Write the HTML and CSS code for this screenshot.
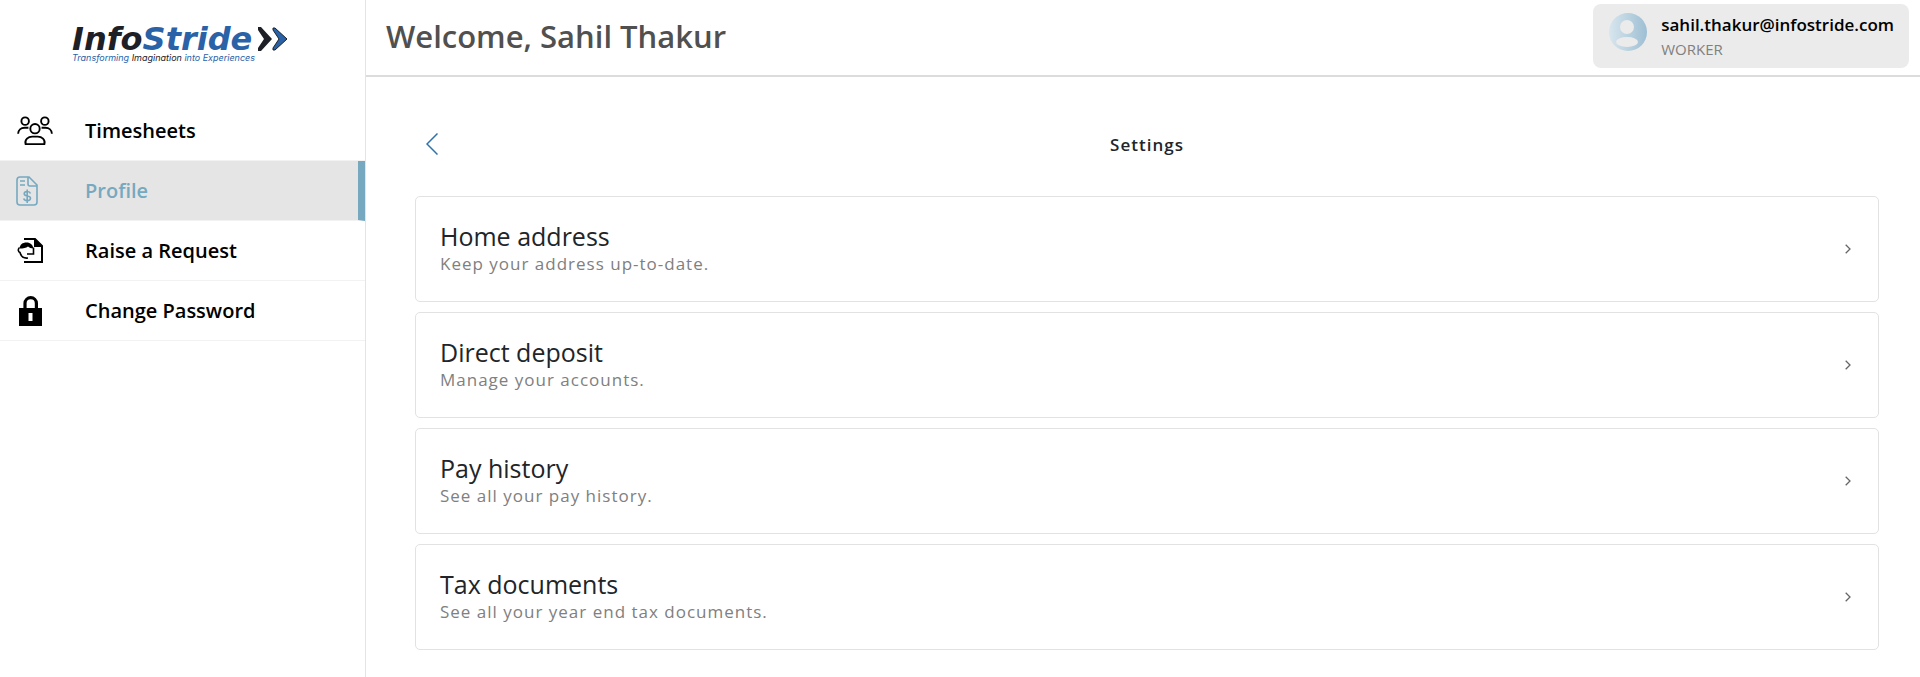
FILE: index.html
```html
<!DOCTYPE html>
<html lang="en">
<head>
    <meta charset="UTF-8">
    <meta name="viewport" content="width=device-width, initial-scale=1.0">
    <title>Settings</title>
    <link rel="stylesheet" href="styles.css">
</head>
<body>
    <aside class="sidebar">
        <a class="logo" href="#">
            <span class="logo-row">
                <span class="logo-name">Info<span class="blue">Stride</span></span>
                <svg class="logo-mark" viewBox="0 0 30 24" aria-hidden="true">
                    <path fill="#1d2026" d="M0 0h3l11 12L3 24H0v-3l6-9-6-9z"/>
                    <path fill="#2a62a8" stroke="#1d2026" d="M15 1h2l12 11-12 11h-2v-2l6-9-6-9z"/>
                </svg>
            </span>
            <span class="logo-tag">Transforming <span class="dark">Imagination</span> into Experiences</span>
        </a>
        <nav class="menu">
            <a href="#">
                <svg class="icon wide" viewBox="0 0 38 32" aria-hidden="true">
                    <g fill="none" stroke="currentColor" stroke-width="2">
                        <circle cx="8.5" cy="5.5" r="4"/>
                        <circle cx="29.5" cy="5.5" r="4"/>
                        <circle cx="19" cy="13.5" r="5"/>
                        <path d="M1 19c0-4 3-6.5 7-6.5h4M37 19c0-4-3-6.5-7-6.5h-4M9 30c-1.5-5 3-8 7-8h6c4 0 8.5 3 7 8z"/>
                    </g>
                </svg>
                Timesheets
            </a>
            <a class="active" href="#">
                <svg class="icon" viewBox="0 0 30 30" aria-hidden="true">
                    <g fill="none" stroke="currentColor" stroke-width="1.6">
                        <path d="M4 1h9l8 8v17a3 3 0 0 1-3 3H4a3 3 0 0 1-3-3V4a3 3 0 0 1 3-3z"/>
                        <path d="M12 1v7a2 2 0 0 0 2 2h7M4 5h5M4 9h5"/>
                        <path d="M14.5 17.5c-.5-1.5-1.5-2-3.3-2s-3 .9-3 2.3 1.2 1.9 3 2.2 3.3.9 3.3 2.3-1.5 2.3-3.3 2.3-3-.6-3.5-2.2M11.2 13.5V27"/>
                    </g>
                </svg>
                Profile
            </a>
            <a href="#">
                <svg class="icon" viewBox="0 0 30 30" aria-hidden="true">
                    <path fill="none" stroke="currentColor" stroke-width="2" d="M8 3h11l7 7v16H8"/>
                    <path fill="currentColor" d="M18 2l9 9h-9zM3.5 12.5C4 8.5 6.5 6.5 10.5 6.5s6.5 2.500 6.8 6c-2.3 0-4-.8-5.3-2-2 1.5-4.5 2-8.5 2z"/>
                    <path fill="none" stroke="currentColor" stroke-width="1.6" d="M3.5 11.5c-1.8 1.5-1.5 4.5.5 5 1 4 4 6 8 5.5M17.5 11.5v6.5H11"/>
                </svg>
                Raise a Request
            </a>
            <a href="#">
                <svg class="icon" viewBox="0 0 30 30" aria-hidden="true">
                    <path fill="none" stroke="currentColor" stroke-width="3.2" d="M9 13V7.3a5.700 5.700 0 0 1 11.400 0V13"/>
                    <path fill="currentColor" fill-rule="evenodd" d="M3 12h23v18H3zM12.5 17v8h4v-8z"/>
                </svg>
                Change Password
            </a>
        </nav>
    </aside>

    <div class="page">
        <header class="topbar">
            <h1>Welcome, Sahil Thakur</h1>
            <button class="user" type="button">
                <svg class="avatar" viewBox="0 0 38 38" aria-hidden="true">
                    <defs>
                        <linearGradient id="avatarFill">
                            <stop offset="0" stop-color="#d8e6ee"/>
                            <stop offset="1" stop-color="#9dbfd3"/>
                        </linearGradient>
                    </defs>
                    <circle cx="19" cy="19" r="19" fill="url(#avatarFill)"/>
                    <circle cx="18" cy="14" r="7" fill="#ebebeb"/>
                    <ellipse cx="18" cy="29" rx="11" ry="5" fill="#ebebeb"/>
                </svg>
                <span class="user-text">
                    <span class="email">sahil.thakur@infostride.com</span>
                    <span class="role">WORKER</span>
                </span>
            </button>
        </header>

        <main class="content">
            <div class="heading">
                <button class="back" type="button" aria-label="Back">
                    <svg viewBox="0 0 12 22" aria-hidden="true"><path d="M11.5 .5L1 11l10.5 10.5"/></svg>
                </button>
                <h2>Settings</h2>
            </div>
            <a class="card" href="#">
                <span class="card-text">
                    <span class="card-title">Home address</span>
                    <span class="card-note">Keep your address up-to-date.</span>
                </span>
                <svg class="arrow" viewBox="0 0 6 10" aria-hidden="true"><path d="M.7 .7L5 5 .7 9.3"/></svg>
            </a>
            <a class="card" href="#">
                <span class="card-text">
                    <span class="card-title">Direct deposit</span>
                    <span class="card-note">Manage your accounts.</span>
                </span>
                <svg class="arrow" viewBox="0 0 6 10" aria-hidden="true"><path d="M.7 .7L5 5 .7 9.3"/></svg>
            </a>
            <a class="card" href="#">
                <span class="card-text">
                    <span class="card-title">Pay history</span>
                    <span class="card-note">See all your pay history.</span>
                </span>
                <svg class="arrow" viewBox="0 0 6 10" aria-hidden="true"><path d="M.7 .7L5 5 .7 9.3"/></svg>
            </a>
            <a class="card" href="#">
                <span class="card-text">
                    <span class="card-title">Tax documents</span>
                    <span class="card-note">See all your year end tax documents.</span>
                </span>
                <svg class="arrow" viewBox="0 0 6 10" aria-hidden="true"><path d="M.7 .7L5 5 .7 9.3"/></svg>
            </a>
        </main>
    </div>
</body>
</html>
```

FILE: styles.css
```css
* {
    box-sizing: border-box;
}

body {
    font-family: "Open Sans", "Noto Sans", sans-serif;
    background-color: #fff;
    color: #212529;
    margin: 0;
    display: flex;
    min-height: 100vh;
}

a {
    color: inherit;
    text-decoration: none;
}

button {
    font-family: inherit;
    border: none;
    padding: 0;
    cursor: pointer;
}

svg {
    flex: none;
}

/* sidebar */
.sidebar {
    width: 366px;
    flex: none;
    border-right: 1px solid #e4e4e4;
}

.logo {
    display: block;
    padding: 25px 0 0 72px;
    height: 101px;
}

.logo-row {
    display: flex;
    align-items: center;
    gap: 6px;
    height: 28px;
}

.logo-name {
    font-family: "DejaVu Sans", sans-serif;
    font-size: 32px;
    font-weight: bold;
    font-style: italic;
    line-height: 28px;
    color: #1d2026;
}

.logo-mark {
    width: 30px;
    height: 24px;
}

.logo-tag {
    display: block;
    font-family: Inter, sans-serif;
    font-size: 9px;
    font-style: italic;
    line-height: 10px;
    color: #2a62a8;
}

.blue {
    color: #2a62a8;
}

.dark {
    color: #1d2026;
}

.menu a {
    display: grid;
    grid-template-columns: 69px 1fr;
    align-items: center;
    height: 60px;
    padding-left: 16px;
    border-bottom: 1px solid #f2f2f2;
    font-size: 20px;
    font-weight: 600;
    color: #000;
}

.menu a.active {
    background-color: #e5e5e5;
    border-right: 7px solid #76a9c0;
    color: #76a9c0;
}

.icon {
    width: 30px;
    height: 30px;
}

.icon.wide {
    width: 38px;
}

/* top bar */
.page {
    flex: 1;
    min-width: 0;
}

.topbar {
    display: flex;
    justify-content: space-between;
    align-items: center;
    height: 77px;
    padding: 0 11px 3px 20px;
    border-bottom: 2px solid #dcdcdc;
}

.topbar h1 {
    margin: 0;
    font-size: 31px;
    font-weight: 600;
    color: #505050;
}

.user {
    display: flex;
    gap: 14px;
    height: 64px;
    padding: 9px 15px 0 16px;
    border-radius: 8px;
    background-color: #ebebeb;
    text-align: left;
}

.avatar {
    width: 38px;
    height: 38px;
}

.email,
.role {
    display: block;
    line-height: 24px;
}

.email {
    font-size: 17px;
    font-weight: 600;
    color: #000;
}

.role {
    font-size: 15px;
    color: #808080;
}

/* settings list */
.content {
    display: grid;
    gap: 10px;
    padding: 49px 41px 27px 49px;
}

.heading {
    display: grid;
    grid-template-columns: 34px 1fr 34px;
    align-items: center;
    height: 36px;
    margin-bottom: 24px;
}

.back {
    background: none;
    display: flex;
    justify-content: center;
}

.back svg {
    width: 12px;
    height: 22px;
    fill: none;
    stroke: #2f72aa;
    stroke-width: 1.5;
}

.heading h2 {
    margin: 0;
    text-align: center;
    font-size: 17px;
    font-weight: 600;
    letter-spacing: 1px;
}

.card {
    display: flex;
    justify-content: space-between;
    align-items: center;
    height: 106px;
    padding: 0 27px 0 24px;
    border: 1px solid #e2e2e2;
    border-radius: 5px;
}

.card-text {
    display: grid;
}

.card-title {
    font-size: 25px;
    line-height: 30px;
}

.card-note {
    font-size: 17px;
    line-height: 26px;
    letter-spacing: 1px;
    color: #808080;
}

.arrow {
    width: 6px;
    height: 10px;
    fill: none;
    stroke: #666;
    stroke-width: 1.3;
}
```
